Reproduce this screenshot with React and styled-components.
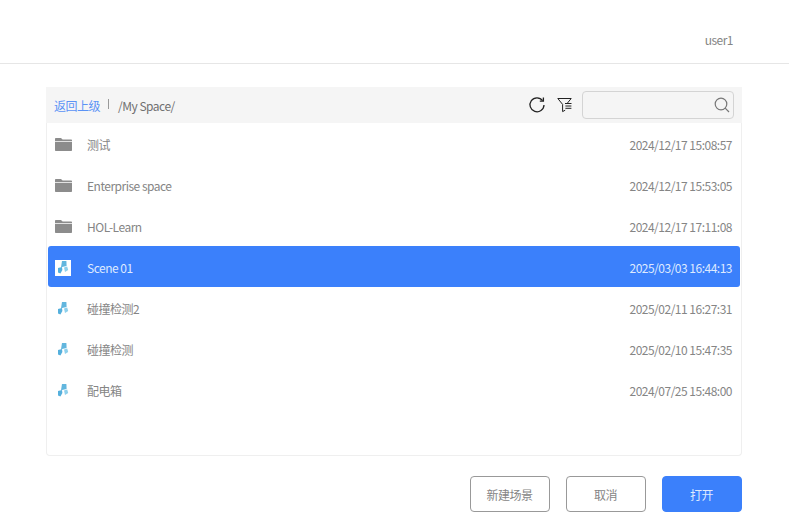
import styled, { createGlobalStyle } from "styled-components"

const GlobalStyle = createGlobalStyle`
  html, body {
    margin: 0;
    padding: 0;
    background: #fff;
    font-family: "Noto Sans CJK SC", "Noto Sans", sans-serif;
    letter-spacing: -0.5px;
  }
`

const rows = [
  { name: "测试", time: "2024/12/17 15:08:57", type: "folder" },
  { name: "Enterprise space", time: "2024/12/17 15:53:05", type: "folder" },
  { name: "HOL-Learn", time: "2024/12/17 17:11:08", type: "folder" },
  { name: "Scene 01", time: "2025/03/03 16:44:13", type: "scene", active: true },
  { name: "碰撞检测2", time: "2025/02/11 16:27:31", type: "scene" },
  { name: "碰撞检测", time: "2025/02/10 15:47:35", type: "scene" },
  { name: "配电箱", time: "2024/07/25 15:48:00", type: "scene" },
]

const FolderIcon = () => (
  <svg width="17" height="13" viewBox="0 0 17 13">
    <path fill="#8c8c8c" d="M0 1C0 .4.4 0 1 0h5l1.6 1.6H16c.6 0 1 .4 1 1v.4H0z" />
    <path fill="#8c8c8c" d="M0 3.8h17V12c0 .6-.4 1-1 1H1c-.6 0-1-.4-1-1z" />
  </svg>
)

const SceneIcon = ({ active }) => (
  <SceneBox $active={active}>
    <svg width="11" height="13" viewBox="0 0 11 13">
      <path fill="#62b6de" d="M4 0h4.4l.2 5L3 6.2z" />
      <path fill="#8ed0ec" d="M6 6.4 9.2 5.6l1 3.4L7 11z" />
      <path fill="#55b0dd" d="M0 7l4-1 .4 3-2 3.5L0 11.5z" />
    </svg>
  </SceneBox>
)

const App = () => (
  <>
    <GlobalStyle />
    <Page>
      <Header>user1</Header>
      <Main>
        <Toolbar>
          <BackLink>返回上级</BackLink>
          <Divider />
          <PathText>/My Space/</PathText>
          <ToolIcons>
            <svg width="18" height="18" viewBox="0 0 18 18" fill="none" stroke="#222" strokeWidth="1.3">
              <path d="M14.6 4.6A7 7 0 1 0 16 9" />
              <path d="M15.4 1.6v3.6h-3.6" />
            </svg>
            <svg width="16" height="16" viewBox="0 0 16 16" fill="none" stroke="#222" strokeWidth="1">
              <path d="M.8 1.5h13.4L10.5 6M.8 1.5 5.6 7.4v7.2l2.6-1.4" />
              <path d="M8 6.5h6.5M8.4 9h6M8.4 11.3h6" />
            </svg>
          </ToolIcons>
          <SearchBox>
            <svg width="16" height="16" viewBox="0 0 16 16" fill="none" stroke="#777" strokeWidth="1.2">
              <circle cx="7" cy="7" r="5.8" />
              <path d="M11.2 11.2 15 15" />
            </svg>
          </SearchBox>
        </Toolbar>
        <List>
          {rows.map(row => (
            <Row key={row.name} $active={row.active}>
              <IconCell>
                {row.type === "folder" ? <FolderIcon /> : <SceneIcon active={row.active} />}
              </IconCell>
              <Name>{row.name}</Name>
              <Time>{row.time}</Time>
            </Row>
          ))}
        </List>
        <Footer>
          <Button>新建场景</Button>
          <Button>取消</Button>
          <Button $primary>打开</Button>
        </Footer>
      </Main>
    </Page>
  </>
)

const Page = styled.div`
  width: 789px;
  height: 532px;
  overflow: hidden;
`

const Header = styled.div`
  height: 63px;
  border-bottom: 1px solid #e6e6e6;
  display: flex;
  justify-content: flex-end;
  padding-right: 56px;
  font-size: 12px;
  line-height: 79px;
  color: #858585;
`

const Main = styled.div`
  padding: 23px 47px 0 46px;
`

const Toolbar = styled.div`
  height: 36px;
  background: #f5f5f5;
  display: flex;
  align-items: center;
  padding: 0 8px;
  font-size: 12px;
`

const BackLink = styled.span`
  color: #5b93f5;
`

const Divider = styled.span`
  width: 1px;
  height: 10px;
  background: #999;
  margin: 0 9px 2px 8px;
`

const PathText = styled.span`
  color: #707070;
`

const ToolIcons = styled.div`
  margin-left: auto;
  display: flex;
  align-items: center;
  gap: 11px;
  margin-right: 9px;
`

const SearchBox = styled.div`
  box-sizing: border-box;
  width: 152px;
  height: 28px;
  border: 1px solid #d4d4d4;
  border-radius: 4px;
  display: flex;
  align-items: center;
  justify-content: flex-end;
  padding-right: 3px;
`

const List = styled.div`
  box-sizing: border-box;
  height: 333px;
  border: 1px solid #efefef;
  border-top: 0;
  border-radius: 0 0 4px 4px;
  padding: 0 1px;
`

const Row = styled.div`
  height: 41px;
  display: flex;
  align-items: center;
  padding: 0 8px 0 7px;
  font-size: 12px;
  border-radius: ${p => (p.$active ? "3px" : "0")};
  background: ${p => (p.$active ? "#3b80fb" : "transparent")};
  color: ${p => (p.$active ? "#dfeaff" : "#858585")};
`

const IconCell = styled.div`
  width: 32px;
  display: flex;
  align-items: center;
  margin-top: 2px;
`

const SceneBox = styled.div`
  width: 16px;
  height: 16px;
  display: flex;
  align-items: center;
  justify-content: center;
  background: ${p => (p.$active ? "#fff" : "transparent")};
`

const Name = styled.span`
  flex: 1;
  margin-top: 2px;
`

const Time = styled.span`
  margin-top: 2px;
`

const Footer = styled.div`
  display: flex;
  justify-content: flex-end;
  gap: 16px;
  margin-top: 20px;
`

const Button = styled.button`
  box-sizing: border-box;
  width: 80px;
  height: 36px;
  padding: 0 1px 0 0;
  border-radius: 4px;
  font: inherit;
  font-size: 12px;
  letter-spacing: -0.5px;
  border: 1px solid ${p => (p.$primary ? "#3b80fb" : "#999")};
  background: ${p => (p.$primary ? "#3b80fb" : "#fff")};
  color: ${p => (p.$primary ? "#dfeaff" : "#858585")};
`

export default App
